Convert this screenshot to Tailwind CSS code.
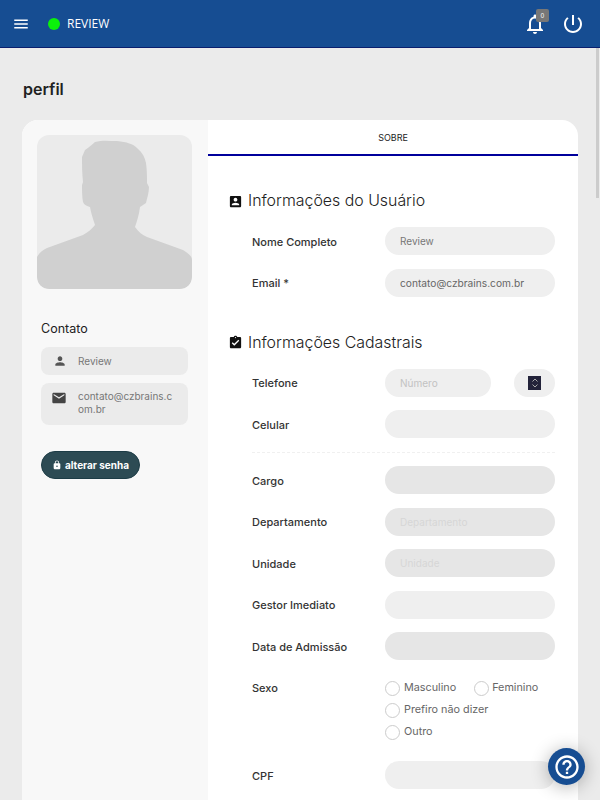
<!DOCTYPE html>
<html lang="pt-BR">
<head>
  <meta charset="UTF-8" />
  <title>perfil</title>
  <script src="https://cdn.jsdelivr.net/npm/@tailwindcss/browser@4"></script>
</head>
<body class="h-[800px] overflow-hidden bg-[#ebebeb] font-['Inter',sans-serif] text-[#222]">
  <!-- top bar -->
  <header class="flex h-12 items-center justify-between border-b border-[#0a1f6e] bg-[#164d92] pl-3 pr-[15px] pt-px text-white">
    <div class="flex items-center">
      <svg class="h-[18px] w-[18px]" viewBox="0 0 24 24" fill="currentColor"><path d="M3 18h18v-2H3v2zm0-5h18v-2H3v2zm0-7v2h18V6H3z"/></svg>
      <span class="ml-[18px] h-3 w-3 rounded-full bg-[#0bf10b]"></span>
      <span class="ml-[7px] font-['Open_Sans',sans-serif] text-xs">REVIEW</span>
    </div>
    <div class="flex items-center gap-[14px]">
      <div class="relative">
        <svg class="h-6 w-6" viewBox="0 0 24 24" fill="currentColor"><path d="M12 22c1.1 0 2-.9 2-2h-4c0 1.1.9 2 2 2zm6-6v-5c0-3.07-1.63-5.64-4.5-6.32V4c0-.83-.67-1.5-1.5-1.5s-1.5.67-1.5 1.5v.68C7.64 5.36 6 7.92 6 11v5l-2 2v1h16v-1l-2-2zm-2 1H8v-6c0-2.48 1.51-4.5 4-4.5s4 2.02 4 4.5v6z"/></svg>
        <span class="absolute -right-[2px] -top-[3px] flex h-[13px] w-[13px] items-center justify-center rounded-[2px] bg-[#777] text-[6px]">0</span>
      </div>
      <svg class="h-6 w-6" viewBox="0 0 24 24" fill="currentColor"><path d="M13 3h-2v10h2V3zm4.83 2.17l-1.42 1.42C17.99 7.86 19 9.81 19 12c0 3.87-3.13 7-7 7s-7-3.13-7-7c0-2.19 1.01-4.14 2.58-5.42L6.17 5.17C4.23 6.82 3 9.26 3 12c0 4.97 4.03 9 9 9s9-4.03 9-9c0-2.74-1.23-5.18-3.17-6.83z"/></svg>
    </div>
  </header>

  <main class="px-[22px]">
    <h1 class="mt-[31px] h-[41px] pl-px text-base font-semibold leading-5">perfil</h1>

    <div class="flex h-[700px] overflow-hidden rounded-t-2xl bg-white">
      <!-- left column -->
      <aside class="w-[186px] shrink-0 bg-[#f8f8f8] pl-[15px] pt-[15px]">
        <div class="h-[154px] w-[155px] overflow-hidden rounded-xl bg-[#ebebeb]">
          <svg class="h-full w-full" viewBox="0 0 155 154" fill="#d0d0d0"><path d="M58 7C65 5 72 6 80 6C90 7 96 9 100 13C106 18 108 23 109 28C110 35 110 42 110 48L112 52C112 58 110 63 109 68L103 72C102 80 100 86 98 92C102 97 105 100 110 102L146 115C151 118 155 121 155 125V142C155 149 150 154 143 154H12C5 154 0 149 0 142V122C2 118 6 115 10 113L46 100C51 97 55 94 58 90C56 84 54 78 53 72C50 71 47 70 46 67C45 62 45 55 45 50L46 47C45 38 45 30 45 22L48 15C52 12 55 10 58 7Z"/></svg>
        </div>
        <div class="pl-1 pt-[31px]">
          <h2 class="text-[12.5px] leading-[18px] text-[#222]">Contato</h2>
          <div class="mt-[9px] flex h-7 w-[147px] items-center rounded-lg bg-[#ebebeb] pl-3 text-[10px] text-[#777]">
            <svg class="h-3.5 w-3.5 text-[#555]" viewBox="0 0 24 24" fill="currentColor"><path d="M12 12c2.21 0 4-1.79 4-4s-1.79-4-4-4-4 1.79-4 4 1.79 4 4 4zm0 2c-2.67 0-8 1.34-8 4v2h16v-2c0-2.66-5.33-4-8-4z"/></svg>
            <span class="ml-[11px]">Review</span>
          </div>
          <div class="mt-2 flex h-[42px] w-[147px] items-start rounded-lg bg-[#ebebeb] pl-[10px] pt-[7px] text-[10px] leading-[13px] text-[#777]">
            <svg class="h-4 w-4 shrink-0 text-[#444]" viewBox="0 0 24 24" fill="currentColor"><path d="M20 4H4c-1.1 0-1.99.9-1.99 2L2 18c0 1.1.9 2 2 2h16c1.1 0 2-.9 2-2V6c0-1.1-.9-2-2-2zm0 4l-8 5-8-5V6l8 5 8-5v2z"/></svg>
            <span class="ml-[11px] w-[98px] break-all">contato@czbrains.com.br</span>
          </div>
          <button class="mt-[26px] flex h-7 w-[99px] items-center justify-center gap-[3px] rounded-full border border-[#1d3c46] bg-[#2d4b54] text-[10px] font-bold text-white">
            <svg class="h-2.5 w-2.5" viewBox="0 0 24 24" fill="currentColor"><path d="M18 8h-1V6c0-2.76-2.24-5-5-5S7 3.24 7 6v2H6c-1.1 0-2 .9-2 2v10c0 1.1.9 2 2 2h12c1.1 0 2-.9 2-2V10c0-1.1-.9-2-2-2zm-6 9c-1.1 0-2-.9-2-2s.9-2 2-2 2 .9 2 2-.9 2-2 2zm3.1-9H8.9V6c0-1.71 1.39-3.1 3.1-3.1 1.71 0 3.1 1.39 3.1 3.1v2z"/></svg>
            alterar senha
          </button>
        </div>
      </aside>

      <!-- right column -->
      <section class="flex-1">
        <div class="flex h-[36px] items-center justify-center border-b-2 border-[#00009c] pt-px text-[9px] text-[#222]">SOBRE</div>

        <div class="pl-[21px] pr-[23px] pt-[35px]">
          <h3 class="-ml-[1.5px] flex h-5 items-center text-[15.9px] font-light text-[#222]">
            <svg class="mr-[5.5px] h-[15px] w-[15px]" viewBox="0 0 24 24" fill="#111"><path d="M3 5v14c0 1.1.89 2 2 2h14c1.1 0 2-.9 2-2V5c0-1.1-.9-2-2-2H5c-1.11 0-2 .9-2 2zm12 4c0 1.66-1.34 3-3 3s-3-1.34-3-3 1.34-3 3-3 3 1.34 3 3zm-9 8c0-2 4-3.1 6-3.1s6 1.1 6 3.1v1H6v-1z"/></svg>
            Informações do Usuário
          </h3>
          <div class="mt-4 flex flex-col gap-[13.5px] pl-[23px]">
            <div class="flex items-center">
              <label class="w-[133px] pt-[2px] text-[11px] font-medium text-[#333]">Nome Completo</label>
              <input class="h-7 w-[170px] rounded-full bg-[#efefef] px-[15px] text-[10px] text-[#777] outline-none" value="Review" />
            </div>
            <div class="flex items-center">
              <label class="w-[133px] pt-[2px] text-[11px] font-medium text-[#333]">Email *</label>
              <input class="h-7 w-[170px] rounded-full bg-[#efefef] px-[15px] text-[10.2px] text-[#666] outline-none" value="contato@czbrains.com.br" />
            </div>
          </div>

          <h3 class="-ml-[1.5px] mt-9 flex h-5 items-center text-[15.9px] font-light text-[#222]">
            <svg class="mr-[5.5px] h-[15px] w-[15px]" viewBox="0 0 24 24" fill="#111"><path d="M19 3h-4.18C14.4 1.84 13.3 1 12 1c-1.3 0-2.4.84-2.82 2H5c-1.1 0-2 .9-2 2v14c0 1.1.9 2 2 2h14c1.1 0 2-.9 2-2V5c0-1.1-.9-2-2-2zm-7 0c.55 0 1 .45 1 1s-.45 1-1 1-1-.45-1-1 .45-1 1-1zm-2 14l-4-4 1.41-1.41L10 14.17l6.59-6.59L18 9l-8 8z"/></svg>
            Informações Cadastrais
          </h3>
          <div class="mt-4 flex flex-col gap-[13.5px] pl-[23px]">
            <div class="flex items-center">
              <label class="w-[133px] pt-[2px] text-[11px] font-medium text-[#333]">Telefone</label>
              <input class="h-7 w-[106px] rounded-full bg-[#efefef] px-[15px] text-[10px] outline-none placeholder:text-[#c2c2c2]" placeholder="Número" />
              <div class="ml-[23px] flex h-7 w-[41px] items-center justify-center rounded-full bg-[#efefef]">
                <span class="flex h-[14px] w-[13px] items-center justify-center bg-[#23233a]">
                  <svg class="h-3 w-2.5" viewBox="0 0 10 12" fill="none" stroke="#aaa" stroke-width="1"><path d="M2.5 4.5L5 2l2.5 2.5M2.5 7.5L5 10l2.5-2.5"/></svg>
                </span>
              </div>
            </div>
            <div class="flex items-center">
              <label class="w-[133px] pt-[2px] text-[11px] font-medium text-[#333]">Celular</label>
              <input class="h-7 w-[170px] rounded-full bg-[#efefef] outline-none" />
            </div>
          </div>

          <div class="ml-[23px] mt-[13.5px] border-t border-dashed border-[#f0f0f0]"></div>

          <div class="mt-[13.5px] flex flex-col gap-[13.5px] pl-[23px]">
            <div class="flex items-center">
              <label class="w-[133px] pt-[2px] text-[11px] font-medium text-[#333]">Cargo</label>
              <input disabled class="h-7 w-[170px] rounded-full bg-[#e6e6e6] outline-none" />
            </div>
            <div class="flex items-center">
              <label class="w-[133px] pt-[2px] text-[11px] font-medium text-[#333]">Departamento</label>
              <input disabled class="h-7 w-[170px] rounded-full bg-[#e6e6e6] px-[15px] text-[10px] outline-none placeholder:text-[#d6d6d6]" placeholder="Departamento" />
            </div>
            <div class="flex items-center">
              <label class="w-[133px] pt-[2px] text-[11px] font-medium text-[#333]">Unidade</label>
              <input disabled class="h-7 w-[170px] rounded-full bg-[#e6e6e6] px-[15px] text-[10px] outline-none placeholder:text-[#d6d6d6]" placeholder="Unidade" />
            </div>
            <div class="flex items-center">
              <label class="w-[133px] pt-[2px] text-[11px] font-medium text-[#333]">Gestor Imediato</label>
              <input class="h-7 w-[170px] rounded-full bg-[#efefef] outline-none" />
            </div>
            <div class="flex items-center">
              <label class="w-[133px] pt-[2px] text-[11px] font-medium text-[#333]">Data de Admissão</label>
              <input disabled class="h-7 w-[170px] rounded-full bg-[#e6e6e6] outline-none" />
            </div>

            <div class="flex items-start pt-[7px]">
              <label class="-mt-px w-[133px] text-[11px] font-medium leading-4 text-[#333]">Sexo</label>
              <div class="flex flex-col gap-[7px] text-[10.8px] text-[#666]">
                <div class="flex h-[15px] items-center">
                  <span class="h-[15px] w-[15px] rounded-full border border-[#ccc]"></span>
                  <span class="ml-1">Masculino</span>
                  <span class="ml-[18px] h-[15px] w-[15px] rounded-full border border-[#ccc]"></span>
                  <span class="ml-[3px]">Feminino</span>
                </div>
                <div class="flex h-[15px] items-center">
                  <span class="h-[15px] w-[15px] rounded-full border border-[#ccc]"></span>
                  <span class="ml-1">Prefiro não dizer</span>
                </div>
                <div class="flex h-[15px] items-center">
                  <span class="h-[15px] w-[15px] rounded-full border border-[#ccc]"></span>
                  <span class="ml-1">Outro</span>
                </div>
              </div>
            </div>

            <div class="flex items-center pt-2">
              <label class="w-[133px] pt-[2px] text-[11px] font-medium text-[#333]">CPF</label>
              <input class="h-7 w-[170px] rounded-full bg-[#efefef] outline-none" />
            </div>
          </div>
        </div>
      </section>
    </div>
  </main>

  <!-- scrollbar thumb + help button float over the page -->
  <div class="fixed right-px top-12 h-[150px] w-[3px] bg-[#cccccc]"></div>
  <button class="fixed left-[548px] top-[748px] flex h-[37px] w-[37px] items-center justify-center rounded-full bg-[#164d92] text-white shadow-[0_2px_18px_rgba(0,0,0,0.3)]">
    <svg class="h-7 w-7" viewBox="0 0 24 24" fill="currentColor"><path d="M11 18h2v-2h-2v2zm1-16C6.48 2 2 6.48 2 12s4.48 10 10 10 10-4.48 10-10S17.52 2 12 2zm0 18c-4.41 0-8-3.59-8-8s3.59-8 8-8 8 3.59 8 8-3.59 8-8 8zm0-14c-2.21 0-4 1.79-4 4h2c0-1.1.9-2 2-2s2 .9 2 2c0 2-3 1.75-3 5h2c0-2.25 3-2.5 3-5 0-2.21-1.79-4-4-4z"/></svg>
  </button>
</body>
</html>
